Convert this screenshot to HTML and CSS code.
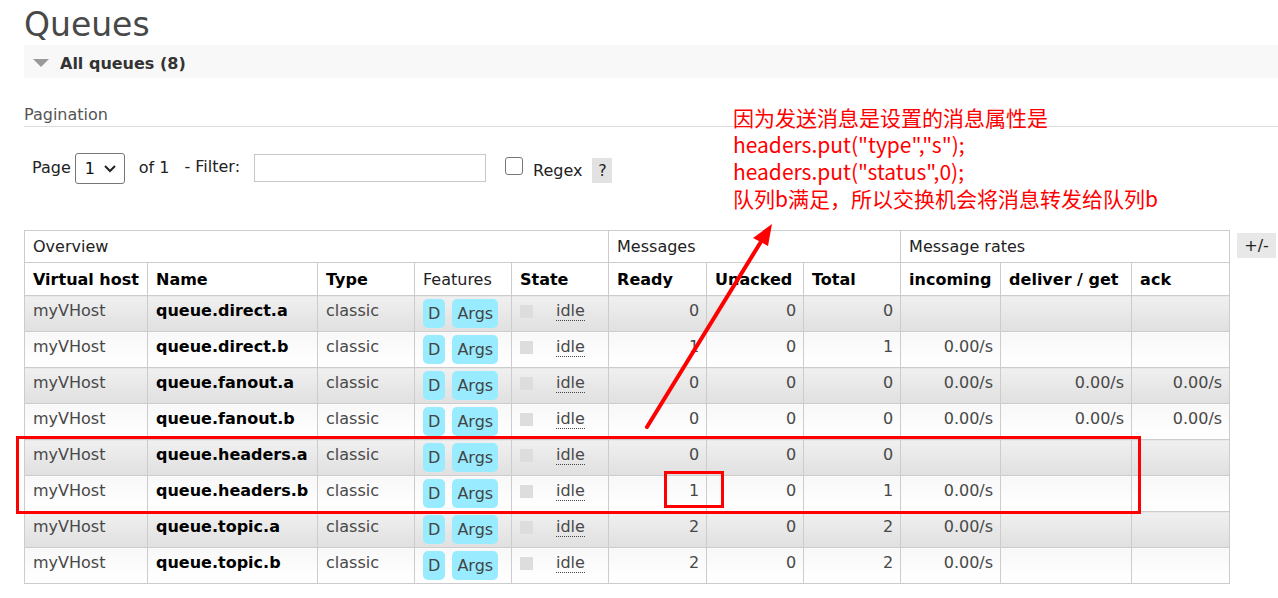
FILE: index.html
```html
<!DOCTYPE html>
<html>
<head>
<meta charset="utf-8">
<link rel="stylesheet" href="styles.css">
</head>
<body>
<div class="main">
  <h1 class="title">Queues</h1>
  <div class="section-bar"><span class="tri"></span><span class="section-title">All queues (8)</span></div>
  <div class="pagination-head">Pagination</div>
  <div class="filter-row">
    <span class="lbl">Page</span>
    <span class="select"><span>1</span><svg width="14" height="10" viewBox="0 0 14 10"><path d="M2 3 L7 8 L12 3" fill="none" stroke="#222" stroke-width="2"/></svg></span>
    <span class="lbl of">of 1</span>
    <span class="lbl filt">- Filter:</span>
    <span class="input"></span>
    <span class="checkbox"></span>
    <span class="lbl regex">Regex</span>
    <span class="help">?</span>
  </div>
  <div class="table-wrap">
    <table class="list">
      <colgroup>
        <col class="c1"><col class="c2"><col class="c3"><col class="c4"><col class="c5"><col class="c6"><col class="c7"><col class="c8"><col class="c9"><col class="c10"><col class="c11">
      </colgroup>
      <thead>
        <tr class="group">
          <th colspan="5">Overview</th>
          <th colspan="3">Messages</th>
          <th colspan="3">Message rates</th>
        </tr>
        <tr class="heads">
          <th>Virtual host</th><th>Name</th><th>Type</th><th class="light">Features</th><th>State</th>
          <th>Ready</th><th>Unacked</th><th>Total</th>
          <th>incoming</th><th>deliver / get</th><th>ack</th>
        </tr>
      </thead>
      <tbody>
        <tr class="alt1"><td>myVHost</td><td class="name">queue.direct.a</td><td>classic</td><td><span class="badge">D</span> <span class="badge">Args</span></td><td><span class="sq"></span><span class="idle">idle</span></td><td class="r">0</td><td class="r">0</td><td class="r">0</td><td class="r"></td><td class="r"></td><td class="r"></td></tr>
        <tr class="alt2"><td>myVHost</td><td class="name">queue.direct.b</td><td>classic</td><td><span class="badge">D</span> <span class="badge">Args</span></td><td><span class="sq"></span><span class="idle">idle</span></td><td class="r">1</td><td class="r">0</td><td class="r">1</td><td class="r">0.00/s</td><td class="r"></td><td class="r"></td></tr>
        <tr class="alt1"><td>myVHost</td><td class="name">queue.fanout.a</td><td>classic</td><td><span class="badge">D</span> <span class="badge">Args</span></td><td><span class="sq"></span><span class="idle">idle</span></td><td class="r">0</td><td class="r">0</td><td class="r">0</td><td class="r">0.00/s</td><td class="r">0.00/s</td><td class="r">0.00/s</td></tr>
        <tr class="alt2"><td>myVHost</td><td class="name">queue.fanout.b</td><td>classic</td><td><span class="badge">D</span> <span class="badge">Args</span></td><td><span class="sq"></span><span class="idle">idle</span></td><td class="r">0</td><td class="r">0</td><td class="r">0</td><td class="r">0.00/s</td><td class="r">0.00/s</td><td class="r">0.00/s</td></tr>
        <tr class="alt1"><td>myVHost</td><td class="name">queue.headers.a</td><td>classic</td><td><span class="badge">D</span> <span class="badge">Args</span></td><td><span class="sq"></span><span class="idle">idle</span></td><td class="r">0</td><td class="r">0</td><td class="r">0</td><td class="r"></td><td class="r"></td><td class="r"></td></tr>
        <tr class="alt2"><td>myVHost</td><td class="name">queue.headers.b</td><td>classic</td><td><span class="badge">D</span> <span class="badge">Args</span></td><td><span class="sq"></span><span class="idle">idle</span></td><td class="r">1</td><td class="r">0</td><td class="r">1</td><td class="r">0.00/s</td><td class="r"></td><td class="r"></td></tr>
        <tr class="alt1"><td>myVHost</td><td class="name">queue.topic.a</td><td>classic</td><td><span class="badge">D</span> <span class="badge">Args</span></td><td><span class="sq"></span><span class="idle">idle</span></td><td class="r">2</td><td class="r">0</td><td class="r">2</td><td class="r">0.00/s</td><td class="r"></td><td class="r"></td></tr>
        <tr class="alt2"><td>myVHost</td><td class="name">queue.topic.b</td><td>classic</td><td><span class="badge">D</span> <span class="badge">Args</span></td><td><span class="sq"></span><span class="idle">idle</span></td><td class="r">2</td><td class="r">0</td><td class="r">2</td><td class="r">0.00/s</td><td class="r"></td><td class="r"></td></tr>
      </tbody>
    </table>
    <span class="plusminus">+/-</span>
  </div>
</div>

<div class="note">
  <div class="note-line">因为发送消息是设置的消息属性是</div>
  <div class="note-line">headers.put("type","s");</div>
  <div class="note-line">headers.put("status",0);</div>
  <div class="note-line">队列b满足，所以交换机会将消息转发给队列b</div>
</div>
<div class="mark mark-rows"></div>
<div class="mark mark-cell"></div>
<svg class="arrow" width="1278" height="598" viewBox="0 0 1278 598">
  <line x1="647" y1="427" x2="762" y2="240" stroke="#ff0000" stroke-width="4" stroke-linecap="round"/>
  <polygon points="772,224 753,238 768,246" fill="#ff0000"/>
</svg>
</body>
</html>
```
FILE: styles.css
```css
html, body {
  margin: 0;
  padding: 0;
  background: #fff;
}
body {
  font-family: "DejaVu Sans", Verdana, sans-serif;
  font-size: 16px;
  color: #484848;
  width: 1278px;
  height: 598px;
  overflow: hidden;
  position: relative;
}
.main {
  padding-left: 24px;
}
.title {
  margin: 0;
  padding-top: 4px;
  font-size: 33px;
  font-weight: normal;
  line-height: 41px;
  color: #484848;
  height: 41px;
}
.section-bar {
  height: 33px;
  background: #f8f8f8;
  display: flex;
  align-items: center;
}
.tri {
  width: 0;
  height: 0;
  border-left: 8px solid transparent;
  border-right: 8px solid transparent;
  border-top: 8px solid #9a9a9a;
  margin-left: 9px;
  margin-right: 11px;
  margin-top: 2px;
}
.section-title {
  font-weight: bold;
  color: #333;
  font-size: 16px;
  margin-top: 3px;
}
.pagination-head {
  margin-top: 26px;
  height: 22px;
  line-height: 22px;
  color: #555;
  border-bottom: 1px solid #ddd;
}
.filter-row {
  margin-top: 25px;
  height: 32px;
  display: flex;
  align-items: center;
  padding-left: 8px;
  color: #222;
}
.lbl {
  line-height: 20px;
}
.select {
  margin-left: 4px;
  width: 50px;
  height: 31px;
  box-sizing: border-box;
  border: 1px solid #767676;
  border-radius: 3px;
  display: flex;
  align-items: center;
  justify-content: space-between;
  padding: 0 7px 0 9px;
  color: #111;
}
.of { margin-left: 14px; }
.filt { margin-left: 15px; margin-top: -3px; }
.input {
  margin-left: 14px;
  width: 232px;
  height: 28px;
  box-sizing: border-box;
  border: 1px solid #c8c8c8;
  background: #fff;
}
.checkbox {
  margin-left: 19px;
  width: 18px;
  height: 18px;
  box-sizing: border-box;
  border: 1px solid #767676;
  border-radius: 3px;
  margin-top: -5px;
}
.regex { margin-left: 10px; margin-top: 5px; }
.help {
  margin-left: 10px;
  width: 20px;
  height: 25px;
  background: #e2e2e2;
  display: flex;
  align-items: center;
  justify-content: center;
  margin-top: 5px;
}
.table-wrap {
  margin-top: 46px;
  display: flex;
  align-items: flex-start;
}
table.list {
  border-collapse: collapse;
  table-layout: fixed;
  width: 1205px;
  border: 1px solid #ccc;
}
col.c1 { width: 123px; }
col.c2 { width: 170px; }
col.c3 { width: 97px; }
col.c4 { width: 97px; }
col.c5 { width: 97px; }
col.c6 { width: 98px; }
col.c7 { width: 97px; }
col.c8 { width: 97px; }
col.c9 { width: 100px; }
col.c10 { width: 131px; }
col.c11 { width: 98px; }
table.list th, table.list td {
  border: 1px solid #ccc;
  padding: 0 8px;
  text-align: left;
  white-space: nowrap;
  overflow: hidden;
}
table.list tr.group th {
  font-weight: normal;
  color: #222;
  height: 30px;
  line-height: 20px;
  padding-top: 1px;
  background: #fff;
}
table.list tr.heads th {
  font-weight: bold;
  color: #000;
  height: 30px;
  line-height: 20px;
  padding-top: 2px;
  background: #fff;
}
table.list tr.heads th.light {
  font-weight: normal;
  color: #222;
}
table.list td {
  height: 36px;
  box-sizing: border-box;
  vertical-align: top;
  padding-top: 5px;
  line-height: 20px;
}
tr.alt1 td {
  background: linear-gradient(#f0f0f0, #e0e0e0);
}
tr.alt2 td {
  background: linear-gradient(#f8f8f8, #ffffff);
}
table.list td.name {
  font-weight: bold;
  color: #000;
}
table.list td.r {
  text-align: right;
  padding-right: 7px;
}
.badge {
  background: #99ebff;
  border-radius: 5px;
  padding: 5px 5px;
  vertical-align: -3px;
  color: #444;
}
.badge + .badge { margin-left: 2px; }
.sq {
  display: inline-block;
  width: 13px;
  height: 13px;
  background: #dddddd;
  margin-right: 23px;
  vertical-align: -2px;
  margin-top: 2px;
}
.idle {
  border-bottom: 1px dotted #484848;
}
.plusminus {
  margin-left: 7px;
  margin-top: 3px;
  width: 39px;
  height: 25px;
  background: #e8e8e8;
  color: #222;
  display: flex;
  align-items: center;
  justify-content: center;
}
.note {
  position: absolute;
  left: 733px;
  top: 104px;
  font-family: "Microsoft YaHei", "Noto Sans CJK SC", sans-serif;
  font-size: 21px;
  color: #ff0000;
  white-space: nowrap;
}
.note-line {
  height: 27px;
  line-height: 26px;
}
.mark {
  position: absolute;
  border: 3px solid #ff0000;
  box-sizing: border-box;
}
.mark-rows {
  left: 16px;
  top: 436px;
  width: 1125px;
  height: 78px;
}
.mark-cell {
  left: 664px;
  top: 471px;
  width: 60px;
  height: 37px;
}
.arrow {
  position: absolute;
  left: 0;
  top: 0;
  pointer-events: none;
}
```
